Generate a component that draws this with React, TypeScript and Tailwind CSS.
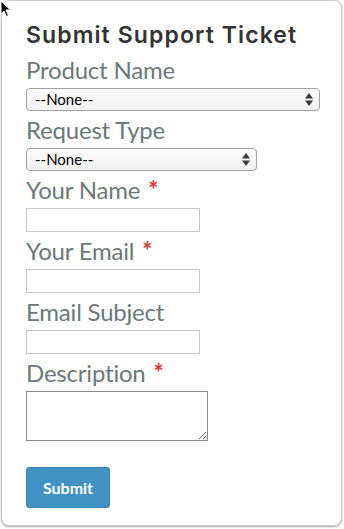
import React from "react";

const labelCls =
  "block text-[24px] leading-[28px] text-[#6b7979] mb-1 tracking-[-0.2px]";

const SelectBox = ({ width }: { width: string }) => (
  <div
    className={`${width} h-[23px] rounded-[4px] border border-[#a3a3a3] bg-gradient-to-b from-[#fdfdfd] to-[#f1f1f1] flex items-center justify-between pl-[8px] pr-[6px] mb-[5px]`}
  >
    <span className="text-[15px] leading-none text-black">--None--</span>
    {/* up/down arrows */}
    <svg width="8" height="13" viewBox="0 0 8 13">
      <path d="M4 0 L8 5.5 L0 5.5 Z" fill="#3a3a3a" />
      <path d="M0 7.5 L8 7.5 L4 13 Z" fill="#3a3a3a" />
    </svg>
  </div>
);

const TextInput = () => (
  <input
    type="text"
    className="block w-[174px] h-[24px] border border-[#c8c8c8] bg-white mb-[5px] outline-none"
  />
);

const Required = () => (
  <span className="text-[#e8322f] ml-[8px] font-bold text-[24px]">*</span>
);

export default function App() {
  return (
    <div
      className="relative w-[344px] h-[529px] bg-white overflow-hidden"
      style={{ fontFamily: "Lato, 'Open Sans', sans-serif" }}
    >
      {/* Card */}
      <div className="ml-[1px] w-[341px] h-[526px] rounded-[8px] border border-[#c9c9c9] bg-white shadow-[0_1px_2px_rgba(0,0,0,0.35)] pl-[24px] pt-[19px]">
        <h1
          className="text-[23px] leading-[30px] font-semibold text-[#333333] tracking-[1.1px] mb-[6px]"
          style={{ fontFamily: "Inter, 'Open Sans', sans-serif" }}
        >
          Submit Support Ticket
        </h1>

        <label className={labelCls}>Product Name</label>
        <SelectBox width="w-[294px]" />

        <label className={labelCls}>Request Type</label>
        <SelectBox width="w-[231px]" />

        <label className={labelCls}>
          Your Name
          <Required />
        </label>
        <TextInput />

        <label className={labelCls}>
          Your Email
          <Required />
        </label>
        <TextInput />

        <label className={labelCls}>Email Subject</label>
        <TextInput />

        <label className={labelCls}>
          Description
          <Required />
        </label>
        <textarea className="block w-[182px] h-[50px] border border-[#8a8a8a] bg-white outline-none resize" />

        <button className="mt-[26px] w-[84px] h-[41px] rounded-[3px] border border-[#3a86b5] bg-[#4193c4] text-white font-bold text-[16px]">
          Submit
        </button>
      </div>

      {/* Mouse cursor */}
      <svg
        className="absolute left-0 top-0"
        width="12"
        height="18"
        viewBox="0 0 12 18"
      >
        <path
          d="M1 1 L1 14 L4 11 L6.5 16.5 L8.5 15.5 L6 10 L10.5 10 Z"
          fill="#000"
          stroke="#fff"
          strokeWidth="1"
        />
      </svg>
    </div>
  );
}
